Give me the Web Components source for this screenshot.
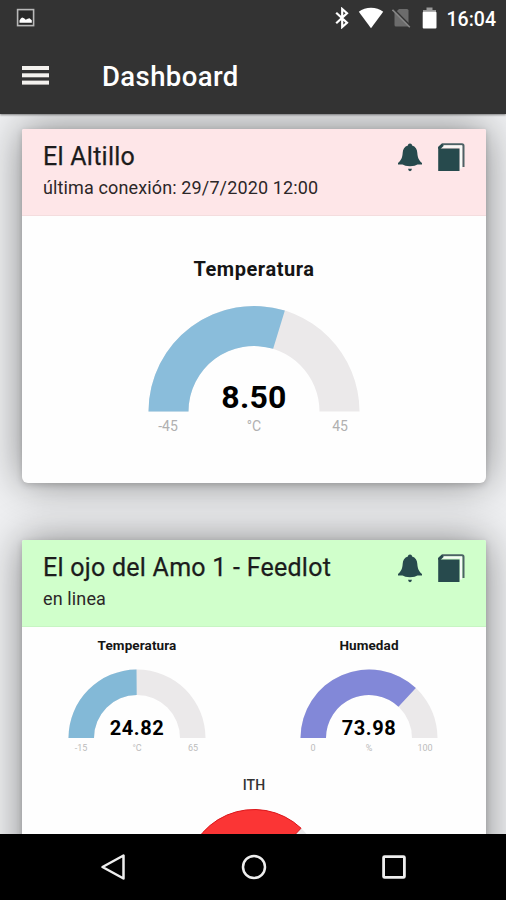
<!DOCTYPE html>
<html lang="es">
<head>
  <meta charset="utf-8">
  <meta name="viewport" content="width=device-width, initial-scale=1">
  <title>Dashboard</title>
  <style>
    html, body {
      margin: 0;
      height: 100%;
      overflow: hidden;
      font-family: Roboto, sans-serif;
    }
  </style>
</head>
<body>
  <app-shell>
    <status-bar slot="top" time="16:04"></status-bar>
    <app-toolbar slot="top">Dashboard</app-toolbar>
    <device-card name="El Altillo" status="última conexión: 29/7/2020 12:00" color="#fee6e8">
      <gauge-meter size="large" label="Temperatura" value="8.50" min="-45" max="45" unit="°C" color="#8abddb"></gauge-meter>
    </device-card>
    <device-card name="El ojo del Amo 1 - Feedlot" status="en linea" color="#d0ffcb">
      <gauge-meter label="Temperatura" value="24.82" min="-15" max="65" unit="°C" color="#83b9d7"></gauge-meter>
      <gauge-meter label="Humedad" value="73.98" min="0" max="100" unit="%" color="#8288d8"></gauge-meter>
      <gauge-meter class="wide" label="ITH" value="74.10" min="0" max="100" unit="" color="#fb3535" edge="#dc1519" light></gauge-meter>
    </device-card>
    <nav-bar slot="bottom"></nav-bar>
  </app-shell>

  <script>
    class AppShell extends HTMLElement {
      constructor() {
        super();
        this.attachShadow({ mode: "open" }).innerHTML = `
          <style>
            :host {
              display: flex;
              flex-direction: column;
              height: 900px;
              width: 506px;
            }
            header {
              flex: none;
              position: relative;
              z-index: 1;
              background: #333;
              box-shadow: 0 1px 2px rgba(0, 0, 0, .45);
            }
            main {
              flex: 1;
              min-height: 0;
              overflow: hidden;
              box-sizing: border-box;
              padding: 14.5px 20.5px 0 21.5px;
              display: flex;
              flex-direction: column;
              gap: 56.5px;
              background: #eff0f2;
            }
          </style>
          <header><slot name="top"></slot></header>
          <main><slot></slot></main>
          <slot name="bottom"></slot>
        `;
      }
    }

    class StatusBar extends HTMLElement {
      constructor() {
        super();
        const time = this.getAttribute("time");
        this.attachShadow({ mode: "open" }).innerHTML = `
          <style>
            :host {
              display: flex;
              align-items: center;
              height: 36px;
              padding: 0 10px 0 16px;
              color: #fff;
              font-size: 19.5px;
              font-weight: 500;
            }
            svg { display: block; flex: none; }
            .bt { margin-left: auto; }
            .wifi { margin-left: 9px; }
            .sim { margin-left: 8px; }
            .battery { margin-left: 11px; }
            span { margin-left: 10px; padding-top: 3px; line-height: 20px; }
          </style>
          <svg width="20" height="20" viewBox="0 0 20 20">
            <rect x="1.6" y="1.6" width="16" height="16" fill="#292929" stroke="#b9b9b9" stroke-width="1.6"/>
            <path d="M3.5 14.7v-2.2l1.3-2 1.3-1 2 .8 1.6 1.5 2-1 1.8-.6 2.3 2v2.5z" fill="#fff"/>
          </svg>
          <svg class="bt" width="14" height="22" viewBox="0 0 14 22" fill="none" stroke="#fff" stroke-width="2.2">
            <path d="M1.2 5.8 12 15.8 7.2 20V2L12 6.2 1.2 16.2"/>
          </svg>
          <svg class="wifi" width="26" height="22" viewBox="0 0 26 22">
            <path d="M.8 4.8Q6 .7 13 .7T25.2 4.8L13 21.2z" fill="#fff"/>
          </svg>
          <svg class="sim" width="19" height="20" viewBox="0 0 19 20">
            <path d="M7 1H15q1.5 0 1.5 1.5V18.5H4q-1.5 0-1.5-1.5V5.5z" fill="#6c6c6c"/>
            <path d="M1.5.8 18.5 18" stroke="#333" stroke-width="1.6"/>
            <path d="M.5 1.8 17.8 19.3" stroke="#858585" stroke-width="1.6"/>
          </svg>
          <svg class="battery" width="15" height="22" viewBox="0 0 15 22">
            <path d="M4.5.5h6V3H14v3H1V3h3.5z" fill="#9a9a9a"/>
            <rect x=".7" y="4.8" width="13.8" height="16.7" rx="1" fill="#fff"/>
          </svg>
          <span>${time}</span>
        `;
      }
    }

    class AppToolbar extends HTMLElement {
      constructor() {
        super();
        this.attachShadow({ mode: "open" }).innerHTML = `
          <style>
            :host {
              display: flex;
              align-items: center;
              gap: 53px;
              height: 78px;
              padding: 3px 0 0 22px;
              box-sizing: border-box;
              color: #fff;
              font-size: 27.5px;
              font-weight: 500;
              letter-spacing: .4px;
            }
            svg { margin-top: -3px; }
          </style>
          <svg width="27" height="19" viewBox="0 0 27 19" fill="#f3f1ee">
            <rect width="27" height="4" y="0"/>
            <rect width="27" height="4" y="7.3"/>
            <rect width="27" height="4" y="14.6"/>
          </svg>
          <slot></slot>
        `;
      }
    }

    class DeviceCard extends HTMLElement {
      constructor() {
        super();
        const name = this.getAttribute("name");
        const status = this.getAttribute("status");
        const color = this.getAttribute("color") ?? "#fff";
        this.attachShadow({ mode: "open" }).innerHTML = `
          <style>
            :host {
              display: block;
              flex: none;
              border-radius: 2px 2px 6px 6px;
              background: #fefefe;
              box-shadow: 0 2px 6px rgba(0, 0, 0, .16), 0 0 42px rgba(0, 0, 0, .45);
            }
            header {
              display: flex;
              justify-content: space-between;
              box-sizing: border-box;
              height: 87.5px;
              padding: 13px 19.5px 0 21.5px;
              border-radius: 2px 2px 0 0;
              border-bottom: 1px solid rgba(0, 0, 0, .04);
              background: ${color};
              color: #1c1c1c;
            }
            h2 {
              margin: 0;
              font-size: 25px;
              font-weight: 400;
              line-height: 30px;
              letter-spacing: .25px;
              -webkit-text-stroke: .25px;
            }
            p {
              margin: 3px 0 0;
              font-size: 18px;
              line-height: 26px;
              letter-spacing: .13px;
              color: #2c2728;
            }
            .actions { display: flex; gap: 14px; }
            section {
              display: grid;
              grid-template-columns: 1fr 1fr;
              justify-items: center;
              padding-right: 1px;
            }
            ::slotted([size="large"]), ::slotted(.wide) {
              grid-column: 1 / -1;
              margin-left: 1.5px;
            }
          </style>
          <header>
            <div>
              <h2>${name}</h2>
              <p>${status}</p>
            </div>
            <div class="actions">
              <svg width="26" height="31" viewBox="0 0 26 31" fill="#274a4d">
                <path d="M13 1.5c1.3 0 2 .9 2.1 2 3.5 1 5 3.9 5.2 7.3.3 5 1.5 7.5 4.7 10.2v1.6H1V21c3.2-2.7 4.4-5.2 4.7-10.2.2-3.4 1.7-6.3 5.2-7.3.1-1.1.8-2 2.1-2z"/>
                <path d="M5.5 22h15q-2 2.2-7.5 2.2T5.5 22z"/>
                <path d="M11 26.8h4q-.4 2.4-2 2.4t-2-2.4z"/>
              </svg>
              <svg width="29" height="31" viewBox="0 0 29 31">
                <path d="M2 7V5.5L5.5 2.2H25q1.5 0 1.5 1.5V25" fill="none" stroke="#4c6265" stroke-width="2"/>
                <path d="M5 4.5H24v22" fill="none" stroke="#f7fbf8" stroke-width="2"/>
                <path d="M1.2 6.5H22.5V29H1.2z" fill="#274a4d"/>
                <path d="M2 6.6 5.8 2.8" stroke="#274a4d" stroke-width="2.8"/>
              </svg>
            </div>
          </header>
          <section><slot></slot></section>
        `;
      }
    }

    // Half-donut gauge, drawn at one unit per pixel
    class GaugeMeter extends HTMLElement {
      constructor() {
        super();
        this.attachShadow({ mode: "open" }).innerHTML = this.getStyles() + this.getGauge();
      }

      arc(cx, cy, outer, inner, from, to) {
        const point = (r, t) => {
          const a = Math.PI * (1 - t);
          return `${(cx + r * Math.cos(a)).toFixed(2)} ${(cy - r * Math.sin(a)).toFixed(2)}`;
        };
        return `M${point(outer, from)}A${outer} ${outer} 0 0 1 ${point(outer, to)}L${point(inner, to)}A${inner} ${inner} 0 0 0 ${point(inner, from)}z`;
      }

      getGauge() {
        const large = this.getAttribute("size") === "large";
        const label = this.getAttribute("label");
        const value = this.getAttribute("value");
        const min = Number(this.getAttribute("min"));
        const max = Number(this.getAttribute("max"));
        const unit = this.getAttribute("unit");
        const color = this.getAttribute("color");
        const edge = this.getAttribute("edge") ?? "none";

        const g = large
          ? { w: 300, h: 267, title: 60, cy: 195.5, outer: 105.5, inner: 65.5, value: 191.7, labels: 215, side: 86 }
          : { w: 230, h: 140, title: 22.5, cy: 111, outer: 68.5, inner: 43, value: 108, labels: 123.7, side: 56 };
        const cx = g.w / 2;
        const t = (Number(value) - min) / (max - min);

        return `
          <svg width="${g.w}" height="${g.h}" viewBox="0 0 ${g.w} ${g.h}" text-anchor="middle">
            <text class="title" x="${cx}" y="${g.title}">${label}</text>
            <path d="${this.arc(cx, g.cy, g.outer, g.inner, 0, 1)}" fill="#ebe9ea"/>
            <path d="${this.arc(cx, g.cy, g.outer, g.inner, 0, t)}" fill="${color}" stroke="${edge}"/>
            <text class="value" x="${cx}" y="${g.value}">${value}</text>
            <text class="range" x="${cx - g.side}" y="${g.labels}">${min}</text>
            <text class="range" x="${cx}" y="${g.labels}">${unit}</text>
            <text class="range" x="${cx + g.side}" y="${g.labels}">${max}</text>
          </svg>
        `;
      }

      getStyles() {
        return `
          <style>
            :host { display: block; }
            svg { display: block; }
            .title { font-size: 13.5px; font-weight: 700; letter-spacing: .1px; fill: #151515; }
            .value { font-size: 20px; font-weight: 700; letter-spacing: .6px; fill: #000; }
            .range { font-size: 9px; fill: #bcbcbc; }
            :host([size="large"]) .title { font-size: 20px; letter-spacing: .55px; }
            :host([size="large"]) .value { font-size: 32px; letter-spacing: .3px; }
            :host([size="large"]) .range { font-size: 14px; fill: #b0b0b0; }
            :host([light]) .title { font-size: 14px; font-weight: 500; fill: #333; }
          </style>
        `;
      }
    }

    class NavBar extends HTMLElement {
      constructor() {
        super();
        this.attachShadow({ mode: "open" }).innerHTML = `
          <style>
            :host {
              display: flex;
              flex: none;
              justify-content: space-between;
              align-items: center;
              height: 66.5px;
              padding: 0 98px 0 99px;
              background: #000;
            }
          </style>
          <svg width="28" height="28" viewBox="0 0 28 28" fill="none" stroke="#eee" stroke-width="2.5" stroke-linejoin="round">
            <path d="M3.5 14 24.5 2.5v23z"/>
          </svg>
          <svg width="28" height="28" viewBox="0 0 28 28" fill="none" stroke="#eee" stroke-width="2.5">
            <circle cx="14" cy="14" r="11"/>
          </svg>
          <svg width="28" height="28" viewBox="0 0 28 28" fill="none" stroke="#eee" stroke-width="2.8">
            <rect x="3.6" y="3.6" width="20.8" height="20.8" rx="1"/>
          </svg>
        `;
      }
    }

    customElements.define("app-shell", AppShell);
    customElements.define("status-bar", StatusBar);
    customElements.define("app-toolbar", AppToolbar);
    customElements.define("device-card", DeviceCard);
    customElements.define("gauge-meter", GaugeMeter);
    customElements.define("nav-bar", NavBar);
  </script>
</body>
</html>
